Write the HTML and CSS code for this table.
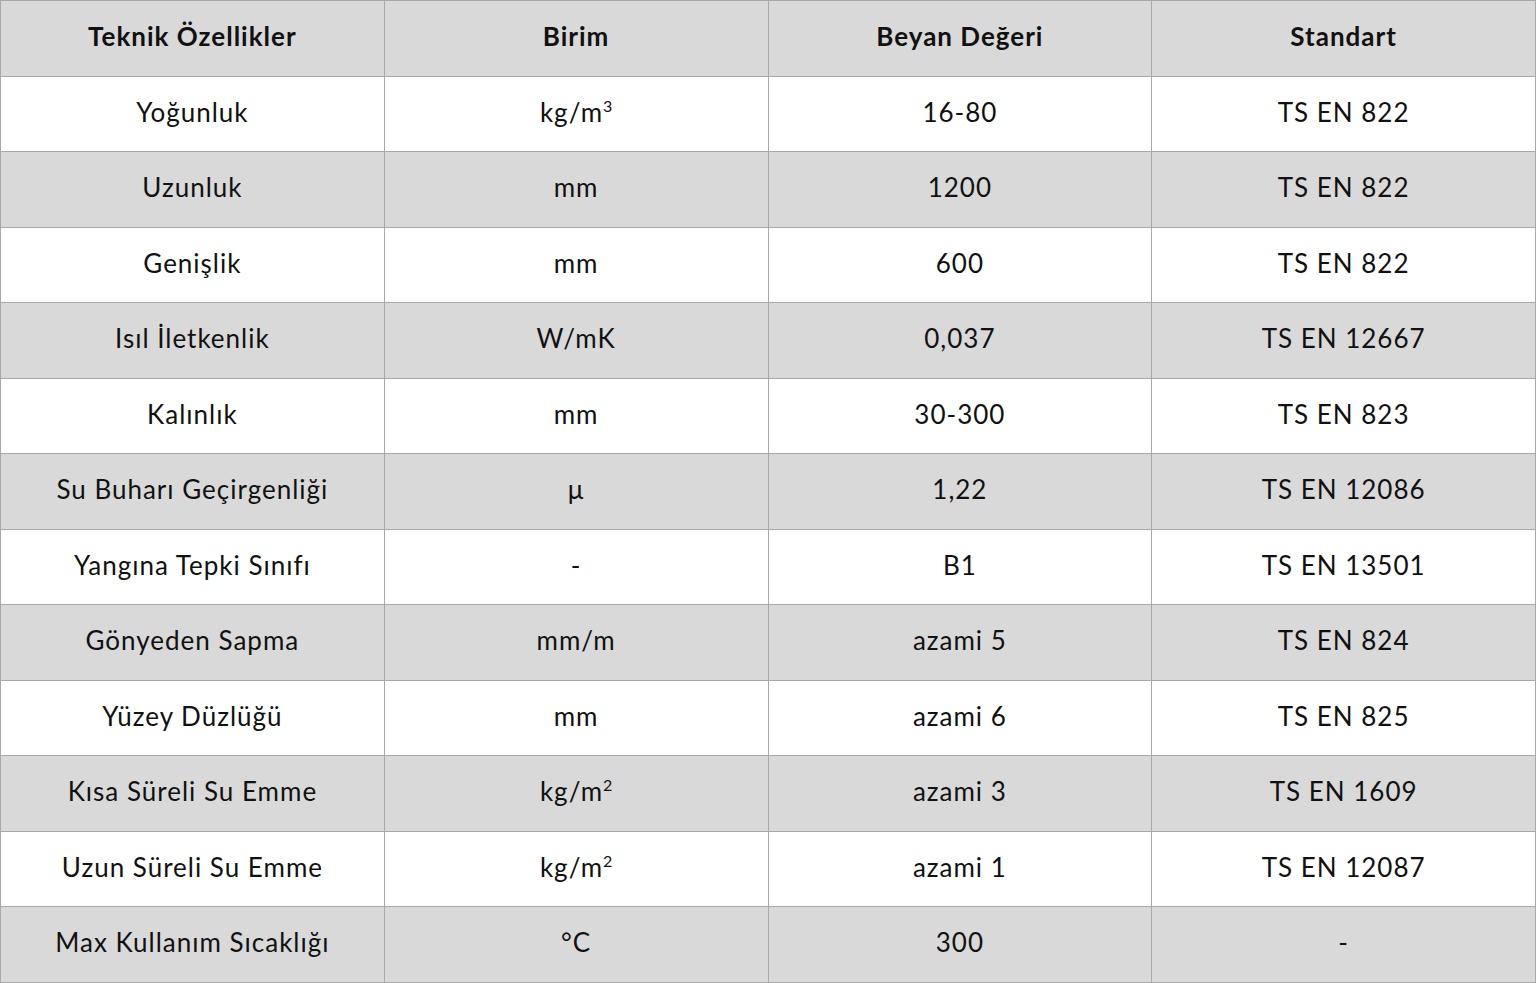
FILE: index.html
```html
<!DOCTYPE html>
<html lang="tr">
<head>
<meta charset="utf-8">
<title>Teknik Özellikler</title>
<link rel="stylesheet" href="styles.css">
</head>
<body>
<table class="spec">
  <thead>
    <tr><th>Teknik Özellikler</th><th>Birim</th><th>Beyan Değeri</th><th>Standart</th></tr>
  </thead>
  <tbody>
    <tr><td>Yoğunluk</td><td>kg/m<sup>3</sup></td><td>16-80</td><td>TS EN 822</td></tr>
    <tr><td>Uzunluk</td><td>mm</td><td>1200</td><td>TS EN 822</td></tr>
    <tr><td>Genişlik</td><td>mm</td><td>600</td><td>TS EN 822</td></tr>
    <tr><td>Isıl İletkenlik</td><td>W/mK</td><td>0,037</td><td>TS EN 12667</td></tr>
    <tr><td>Kalınlık</td><td>mm</td><td>30-300</td><td>TS EN 823</td></tr>
    <tr><td>Su Buharı Geçirgenliği</td><td>µ</td><td>1,22</td><td>TS EN 12086</td></tr>
    <tr><td>Yangına Tepki Sınıfı</td><td>-</td><td>B1</td><td>TS EN 13501</td></tr>
    <tr><td>Gönyeden Sapma</td><td>mm/m</td><td>azami 5</td><td>TS EN 824</td></tr>
    <tr><td>Yüzey Düzlüğü</td><td>mm</td><td>azami 6</td><td>TS EN 825</td></tr>
    <tr><td>Kısa Süreli Su Emme</td><td>kg/m<sup>2</sup></td><td>azami 3</td><td>TS EN 1609</td></tr>
    <tr><td>Uzun Süreli Su Emme</td><td>kg/m<sup>2</sup></td><td>azami 1</td><td>TS EN 12087</td></tr>
    <tr><td>Max Kullanım Sıcaklığı</td><td>°C</td><td>300</td><td>-</td></tr>
  </tbody>
</table>
</body>
</html>
```
FILE: styles.css
```css
html, body {
  margin: 0;
  padding: 0;
  background: #ffffff;
}
body {
  font-family: "Lato", "Open Sans", "Liberation Sans", sans-serif;
  color: #111111;
}
.spec {
  width: 1536px;
  border-collapse: collapse;
  table-layout: fixed;
}
.spec th,
.spec td {
  border: 1px solid #a9a9a9;
  text-align: center;
  vertical-align: middle;
  height: 70.5px;
  padding: 0 0 4px 0;
  font-size: 26px;
  line-height: 30px;
  letter-spacing: 1px;
}
.spec th {
  background: #d9d9d9;
  font-weight: 700;
  letter-spacing: 1px;
}
.spec td {
  font-weight: 400;
}
.spec tbody tr:nth-child(even) td {
  background: #d9d9d9;
}
.spec sup {
  font-size: 16px;
  line-height: 0;
  vertical-align: 10px;
  letter-spacing: 0;
}
```
